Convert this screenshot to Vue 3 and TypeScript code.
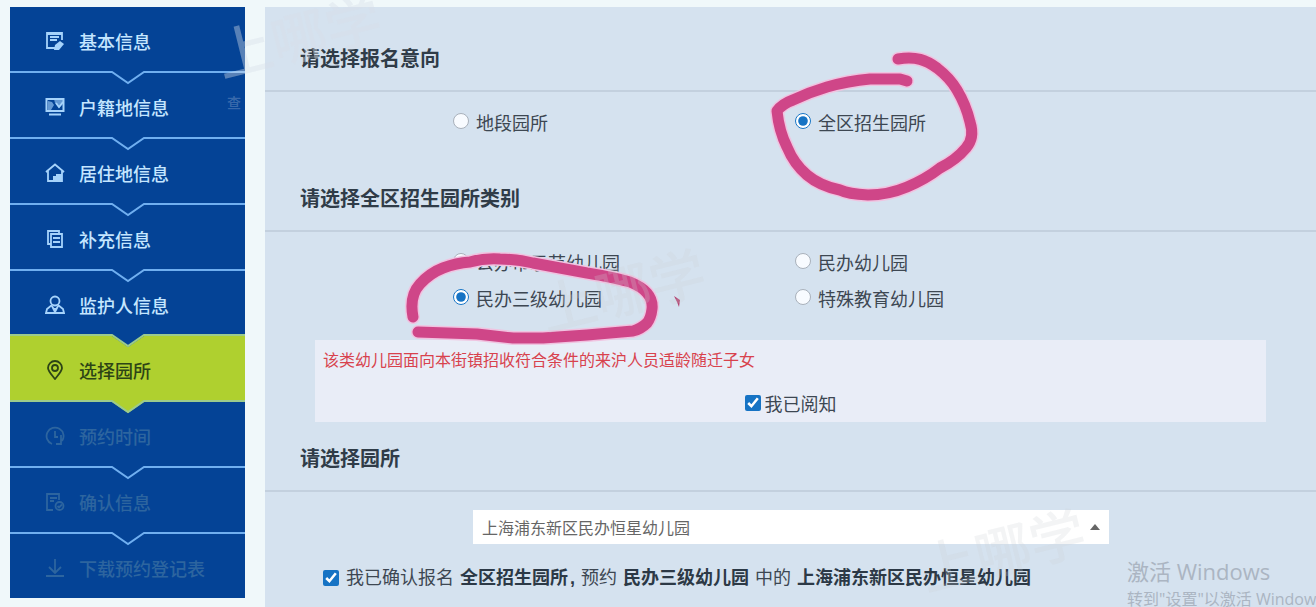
<script setup lang="ts">
import { ref } from 'vue'

interface Step {
  label: string
  icon: string
  state: 'done' | 'active' | 'todo'
}

const steps: Step[] = [
  { label: '基本信息', icon: 'form', state: 'done' },
  { label: '户籍地信息', icon: 'screen', state: 'done' },
  { label: '居住地信息', icon: 'house', state: 'done' },
  { label: '补充信息', icon: 'copy', state: 'done' },
  { label: '监护人信息', icon: 'person', state: 'done' },
  { label: '选择园所', icon: 'pin', state: 'active' },
  { label: '预约时间', icon: 'clock', state: 'todo' },
  { label: '确认信息', icon: 'confirm', state: 'todo' },
  { label: '下载预约登记表', icon: 'download', state: 'todo' },
]

const intent = ref('全区招生园所')
const category = ref('民办三级幼儿园')
const school = ref('上海浦东新区民办恒星幼儿园')
const read = ref(true)
const confirmed = ref(true)

const intents = ['地段园所', '全区招生园所']
const categories = ['公办市示范幼儿园', '民办幼儿园', '民办三级幼儿园', '特殊教育幼儿园']
</script>

<template>
  <div class="page">
    <nav class="steps">
      <a v-for="s in steps" :key="s.label" href="#" class="step" :class="s.state">
        <svg class="icon" viewBox="0 0 20 20" fill="none" stroke="currentColor" stroke-width="1.8">
          <g v-if="s.icon === 'form'">
            <path d="M17 9V2H2v15h8M2 3h15M5 6h9M5 9h7" />
            <path d="M9 19l1-5 5-4 4 3-5 6z" fill="currentColor" stroke="none" />
          </g>
          <g v-else-if="s.icon === 'screen'">
            <path d="M1.500 2h17v12h-17zM4 17.500h12" stroke-width="2" />
            <path d="M9 2h9v5l-4 4-4-5zM3 4l4 1 2 3-3 5H3z" fill="currentColor" stroke="none" fill-opacity=".6" />
            <path d="M11 6l3 4 4-5" />
          </g>
          <g v-else-if="s.icon === 'house'">
            <path d="M9 18H3V8l-2 1 9-7.500L19 9l-2-1v10H9" />
            <path d="M8 18v-5h3v-2h6v7z" fill="currentColor" stroke="none" />
          </g>
          <g v-else-if="s.icon === 'copy'">
            <path d="M6 5h11v13H6zM6 15H3V2h11v2M8 9h7M8 13h7" />
          </g>
          <g v-else-if="s.icon === 'person'">
            <circle cx="10" cy="6" r="4.500" />
            <path d="M7 10l-5 4-1 4h18l-1-4-5-4M7 11l3 6 3-6M10 13v5" />
          </g>
          <g v-else-if="s.icon === 'pin'">
            <path d="M10 19C6 14 3 11 3 8a7 7 0 0 1 14 0c0 3-3 6-7 11z" />
            <circle cx="10" cy="8" r="3" />
          </g>
          <g v-else-if="s.icon === 'clock'">
            <path d="M7 18a8.500 8.500 0 1 1 10-3M10 5v6h3M16 9v9h-5" />
          </g>
          <g v-else-if="s.icon === 'confirm'">
            <path d="M8 18H2V2h12v6M5 6h7M5 9h4" />
            <circle cx="14.500" cy="14" r="4" />
            <path d="M12.500 14l1.500 1.500 3-3" />
          </g>
          <g v-else>
            <path d="M10 1v13M4 9l6 6 6-6M1 18h18" />
          </g>
        </svg>
        <span>{{ s.label }}</span>
        <svg class="notch" viewBox="0 0 36 16">
          <path class="notch-fill" d="M2 0H34V2L18 13L2 2z" />
          <path class="notch-line" d="M0 1H2L18 12L34 1H36" />
        </svg>
      </a>
    </nav>

    <main class="panel">
      <h2>请选择报名意向</h2>
      <div class="options single">
        <label v-for="o in intents" :key="o" class="option">
          <input v-model="intent" type="radio" name="intent" :value="o" />{{ o }}
        </label>
      </div>

      <h2>请选择全区招生园所类别</h2>
      <div class="options">
        <label v-for="o in categories" :key="o" class="option">
          <input v-model="category" type="radio" name="category" :value="o" />{{ o }}
        </label>
      </div>

      <section class="notice">
        <p>该类幼儿园面向本街镇招收符合条件的来沪人员适龄随迁子女</p>
        <label class="read"><input v-model="read" type="checkbox" />我已阅知</label>
      </section>

      <h2>请选择园所</h2>
      <div class="picker">
        <select v-model="school" aria-label="请选择园所">
          <option>上海浦东新区民办恒星幼儿园</option>
        </select>
        <svg class="caret" viewBox="0 0 10 6"><path d="M0 6L5 0L10 6z" /></svg>
      </div>
      <label class="confirm">
        <input v-model="confirmed" type="checkbox" />
        <span>我已确认报名 <b>{{ intent }}</b><b>,</b> 预约 <b>{{ category }}</b> 中的 <b>{{ school }}</b></span>
      </label>

      <svg class="marks" width="760" height="400" viewBox="265 7 760 400">
        <g class="halo">
          <path d="M898 59C916 56 926 60 937 68Q950 78 957 90Q966 105 970 122Q975 138 966 148Q956 160 940 168Q926 179 907 187Q888 195 868 195Q848 194 840 190Q820 186 807 175Q794 164 787 147Q779 131 777 111Q782 104 793 100Q810 92 827 87Q848 81 870 79L900 79L907 81" />
          <path d="M413 317Q409 296 420 284Q430 273 443 268Q456 263 470 262Q484 258 500 259Q515 259 533 263L587 273Q612 277 630 282Q642 287 647 293Q653 300 652 309Q651 318 647 323Q641 329 633 331L587 335L543 338H513L477 334L418 332" />
        </g>
        <g class="ink">
          <path d="M898 59C916 56 926 60 937 68Q950 78 957 90Q966 105 970 122Q975 138 966 148Q956 160 940 168Q926 179 907 187Q888 195 868 195Q848 194 840 190Q820 186 807 175Q794 164 787 147Q779 131 777 111Q782 104 793 100Q810 92 827 87Q848 81 870 79L900 79L907 81" />
          <path d="M413 317Q409 296 420 284Q430 273 443 268Q456 263 470 262Q484 258 500 259Q515 259 533 263L587 273Q612 277 630 282Q642 287 647 293Q653 300 652 309Q651 318 647 323Q641 329 633 331L587 335L543 338H513L477 334L418 332" />
        </g>
        <path class="fleck" d="M674 296l6 4-1 7-2-5z" />
      </svg>
    </main>

    <span class="watermark wm-top">上哪学</span>
    <span class="watermark-small">查</span>
    <span class="watermark wm-mid">上哪学</span>
    <span class="watermark wm-low">上哪学</span>
    <aside class="activate">
      <strong>激活 Windows</strong>
      <span>转到"设置"以激活 Windows</span>
    </aside>
  </div>
</template>

<style>
body {
  margin: 0;
  background: #f0f8fa;
}
</style>

<style scoped>
.page {
  position: relative;
  display: flex;
  gap: 20px;
  box-sizing: border-box;
  min-height: 100vh;
  padding: 7px 0 0 10px;
  overflow: hidden;
  color: #3d4752;
  font: 18px/36px "Noto Sans CJK SC", sans-serif;
}
.steps {
  display: flex;
  flex: 0 0 235px;
  flex-direction: column;
  margin-bottom: 9px;
}
.step {
  position: relative;
  display: flex;
  flex: 1;
  align-items: center;
  gap: 14px;
  box-sizing: border-box;
  padding: 4px 0 0 35px;
  border-bottom: 2px solid #70aff0;
  background: #044396;
  color: #c4e6ff;
  font-weight: 500;
  text-decoration: none;
}
.step:last-child {
  border-bottom: 0;
}
.step:last-child .notch {
  display: none;
}
.icon {
  width: 20px;
  height: 20px;
}
.done .icon {
  color: #a6d3fb;
}
.active {
  border-color: #9ccb8c;
  background: #afd02f;
  color: #2d4416;
}
.todo {
  color: #2d659f;
}
.step:has(+ .active) {
  border-color: #9ccb8c;
}
.notch {
  position: absolute;
  z-index: 1;
  top: 100%;
  left: 50%;
  width: 36px;
  height: 16px;
  margin-left: -18px;
}
.notch-fill {
  fill: #044396;
}
.active .notch-fill {
  fill: #afd02f;
}
.notch-line {
  fill: none;
  stroke: #70aff0;
  stroke-width: 2;
}
.active .notch-line,
.step:has(+ .active) .notch-line {
  stroke: #9ccb8c;
}
.panel {
  position: relative;
  flex: 1;
  min-width: 0;
  padding-top: 37px;
  background: #d5e2ef;
}
h2 {
  margin: 0;
  padding: 0 0 18px 35px;
  border-bottom: 2px solid #c3d0de;
  color: #303c48;
  font-size: 20px;
  font-weight: 700;
  line-height: 28px;
}
.options {
  display: grid;
  grid-template-columns: 342fr 521fr;
  padding: 12px 0 24px 188px;
}
.single {
  padding-bottom: 44px;
}
.option {
  display: flex;
  align-items: center;
  gap: 7px;
}
input {
  width: 16px;
  height: 16px;
  margin: 0;
  accent-color: #1673c4;
}
.option input {
  margin-bottom: 2px;
}
.option input:not(:checked) {
  border: 1px solid #a9b1bb;
  border-radius: 50%;
  appearance: none;
  box-sizing: border-box;
  background: #f8fbff;
}
.notice {
  margin: 0 50px 22px;
  padding: 1px 8px;
  background: #e9edf7;
}
.notice p {
  margin: 0;
  color: #d8424d;
  font-size: 16px;
}
.read {
  display: flex;
  align-items: center;
  justify-content: center;
  gap: 4px;
  padding: 8px 0 0;
}
.picker {
  position: relative;
  width: 636px;
  max-width: 75%;
  margin: 18px 0 0 208px;
}
select {
  display: block;
  width: 100%;
  height: 34px;
  padding: 0 9px;
  border: 0;
  border-radius: 0;
  appearance: none;
  background: #fff;
  color: #666;
  font: 16px "Noto Sans CJK SC", sans-serif;
}
.caret {
  position: absolute;
  top: 14px;
  right: 9px;
  width: 10px;
  height: 6px;
  fill: #666;
}
.confirm {
  display: flex;
  align-items: center;
  gap: 7px;
  margin: 16px 0 0 58px;
  font-family: "Liberation Sans", "Noto Sans CJK SC", sans-serif;
}
b {
  margin: 0 1px;
  color: #2c3946;
}
.marks {
  position: absolute;
  top: 0;
  left: 0;
  pointer-events: none;
}
.halo,
.ink {
  fill: none;
  stroke: #f0c3e0;
  stroke-width: 14;
  stroke-linecap: round;
  stroke-linejoin: round;
}
.ink {
  stroke: #cf4688;
  stroke-width: 11;
}
.fleck {
  fill: #b3416f;
}
.watermark,
.watermark-small {
  position: absolute;
  z-index: 2;
  font-weight: 500;
  white-space: nowrap;
  pointer-events: none;
}
.watermark {
  color: rgb(205 208 214 / 24%);
  font-size: 56px;
  line-height: 60px;
  transform: rotate(-14deg);
}
.wm-top {
  top: 4px;
  left: 214px;
  color: rgb(215 222 232 / 40%);
}
.wm-mid {
  top: 258px;
  left: 538px;
}
.wm-low {
  top: 518px;
  left: 918px;
}
.watermark-small {
  top: 84px;
  left: 227px;
  color: rgb(190 205 225 / 30%);
  font-size: 14px;
}
.activate {
  position: absolute;
  right: 0;
  bottom: 0;
  display: flex;
  flex-direction: column;
  width: 189px;
  height: 50px;
  overflow: hidden;
  color: #abb5c2;
  font-family: "Open Sans", "Noto Sans CJK SC", sans-serif;
  white-space: nowrap;
}
.activate strong {
  font-size: 22px;
  font-weight: 400;
  line-height: 28px;
}
.activate span {
  font-size: 16px;
  line-height: 28px;
}
</style>
